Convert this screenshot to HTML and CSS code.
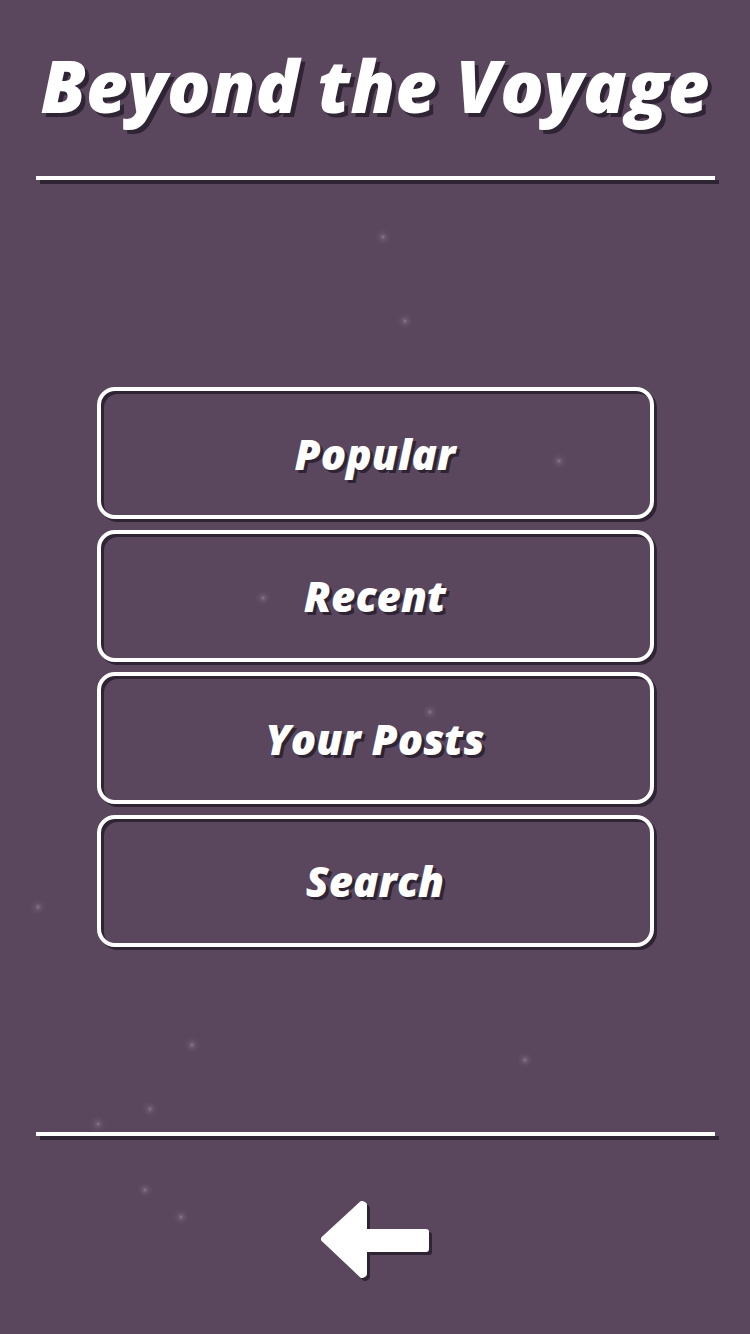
FILE: index.html
```html
<!DOCTYPE html>
<html>
<head>
<meta charset="utf-8">
<link rel="stylesheet" href="styles.css">
</head>
<body>
<div class="screen">
  <div class="stars">
    <span class="star" style="left:383px;top:237px"></span>
    <span class="star" style="left:405px;top:321px"></span>
    <span class="star" style="left:559px;top:461px"></span>
    <span class="star" style="left:263px;top:598px"></span>
    <span class="star" style="left:430px;top:712px"></span>
    <span class="star" style="left:38px;top:907px"></span>
    <span class="star" style="left:192px;top:1045px"></span>
    <span class="star" style="left:525px;top:1060px"></span>
    <span class="star" style="left:150px;top:1109px"></span>
    <span class="star" style="left:98px;top:1124px"></span>
    <span class="star" style="left:145px;top:1190px"></span>
    <span class="star" style="left:181px;top:1217px"></span>
  </div>
  <header class="header">
    <h1 class="title">Beyond the Voyage</h1>
    <div class="rule"></div>
  </header>
  <nav class="menu">
    <button class="menu-btn">Popular</button>
    <button class="menu-btn">Recent</button>
    <button class="menu-btn">Your Posts</button>
    <button class="menu-btn">Search</button>
  </nav>
  <footer class="footer">
    <div class="rule"></div>
    <button class="back" aria-label="Back">
      <svg width="116" height="86" viewBox="0 0 116 86">
        <path d="M6,42 L44,7 L46,8 L46,35 L108,35 L108,52 L46,52 L46,77 L44,78 Z" fill="#fff" stroke="#fff" stroke-width="6" stroke-linejoin="round"/>
      </svg>
    </button>
  </footer>
</div>
</body>
</html>
```
FILE: styles.css
```css
html, body {
  margin: 0;
  padding: 0;
  background: #5a465d;
}
.screen {
  position: relative;
  width: 750px;
  height: 1334px;
  overflow: hidden;
  display: flex;
  flex-direction: column;
  font-family: "Open Sans", Lato, sans-serif;
  color: #fff;
}
.stars {
  position: absolute;
  inset: 0;
  pointer-events: none;
}
.star {
  position: absolute;
  width: 16px;
  height: 16px;
  margin: -8px 0 0 -8px;
  border-radius: 50%;
  background: radial-gradient(circle, rgba(255,255,255,0.3) 0, rgba(255,255,255,0.1) 2px, rgba(255,255,255,0.03) 5px, rgba(255,255,255,0) 8px);
}
.header {
  padding-top: 42px;
  display: flex;
  flex-direction: column;
  align-items: center;
}
.title {
  margin: 0;
  font-size: 72px;
  line-height: 86px;
  font-weight: 800;
  font-style: italic;
  letter-spacing: 0;
  text-shadow: 4px 4px 0 #2e2433;
  height: 86px;
  white-space: nowrap;
}
.rule {
  width: 679px;
  height: 4px;
  background: #fff;
  box-shadow: 4px 4px 0 #2e2433;
}
.header .rule {
  margin-top: 48px;
}
.menu {
  margin-top: 207px;
  display: flex;
  flex-direction: column;
  align-items: center;
  gap: 10.5px;
}
.menu-btn {
  box-sizing: border-box;
  width: 557px;
  height: 132px;
  border: 4px solid #fff;
  border-radius: 18px;
  background: transparent;
  box-shadow: 3px 3px 0 #2e2433, inset 3px 3px 0 #2e2433;
  color: #fff;
  font-family: "Open Sans", Lato, sans-serif;
  font-size: 42px;
  font-weight: 800;
  font-style: italic;
  text-shadow: 3px 3px 0 #2e2433;
  padding: 0;
  cursor: pointer;
}
.footer {
  margin-top: 185px;
  display: flex;
  flex-direction: column;
  align-items: center;
}
.back {
  margin-top: 61px;
  margin-left: 2px;
  background: none;
  border: 0;
  padding: 0;
  display: block;
  filter: drop-shadow(3px 3px 0 #2e2433);
}
.back svg {
  display: block;
}
```
